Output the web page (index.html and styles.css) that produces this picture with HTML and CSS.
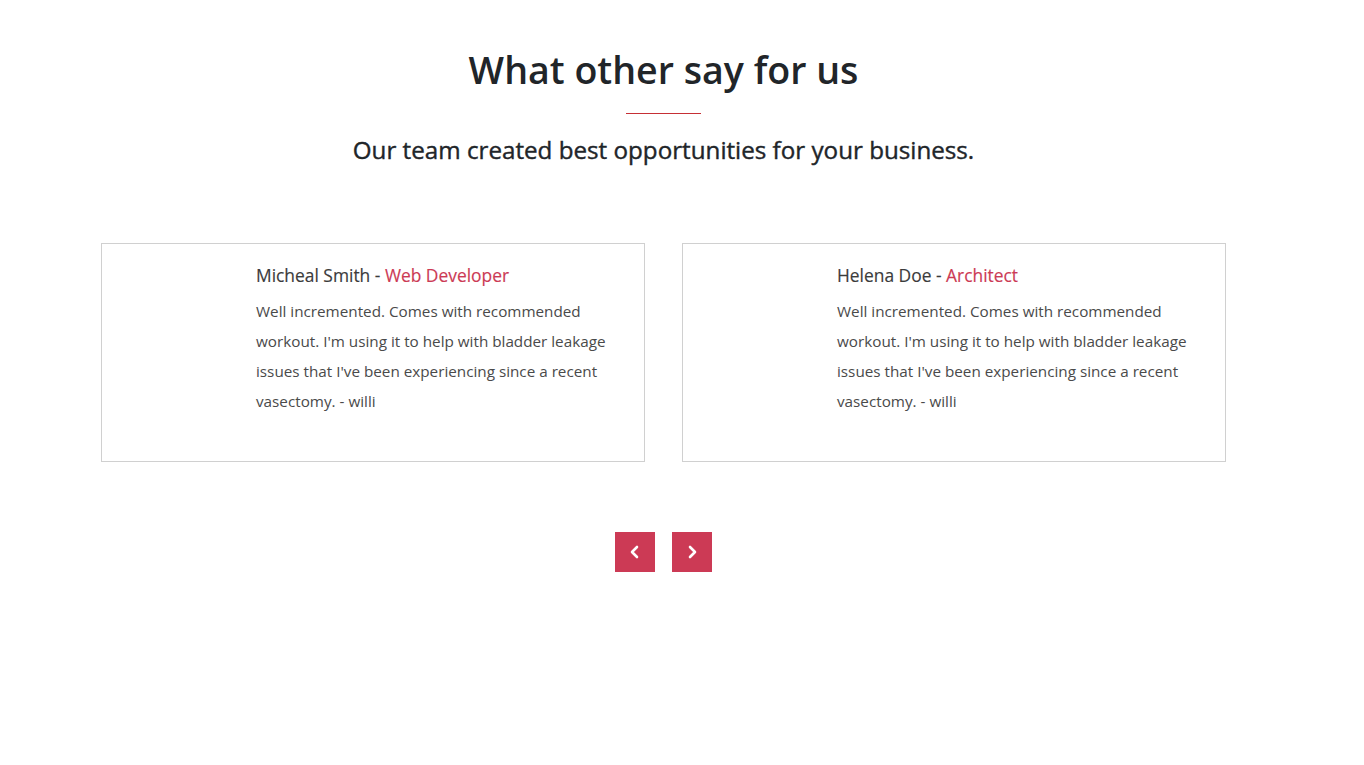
FILE: index.html
```html
<!DOCTYPE html>
<html lang="en">
<head>
<meta charset="utf-8">
<title>Testimonials</title>
<link rel="stylesheet" href="styles.css">
</head>
<body>
<section class="testimonials">
  <header class="section-head">
    <h2 class="section-title">What other say for us</h2>
    <span class="title-rule"></span>
    <h4 class="section-sub">Our team created best opportunities for your business.</h4>
  </header>

  <div class="carousel">
    <div class="slides">
      <article class="card">
        <h5 class="card-name">Micheal Smith - <span class="role">Web Developer</span></h5>
        <p class="card-text">Well incremented. Comes with recommended workout. I'm using it to help with bladder leakage issues that I've been experiencing since a recent vasectomy. - willi</p>
      </article>
      <article class="card">
        <h5 class="card-name">Helena Doe - <span class="role">Architect</span></h5>
        <p class="card-text">Well incremented. Comes with recommended workout. I'm using it to help with bladder leakage issues that I've been experiencing since a recent vasectomy. - willi</p>
      </article>
    </div>
    <div class="nav">
      <button class="nav-btn" aria-label="Previous">
        <svg width="14" height="14" viewBox="0 0 14 14"><path d="M9 2 L4 7 L9 12" fill="none" stroke="#fff" stroke-width="2.6" stroke-linecap="round" stroke-linejoin="round"/></svg>
      </button>
      <button class="nav-btn" aria-label="Next">
        <svg width="14" height="14" viewBox="0 0 14 14"><path d="M5 2 L10 7 L5 12" fill="none" stroke="#fff" stroke-width="2.6" stroke-linecap="round" stroke-linejoin="round"/></svg>
      </button>
    </div>
  </div>
</section>
</body>
</html>
```
FILE: styles.css
```css
* { box-sizing: border-box; }

body {
  margin: 0;
  background: #fff;
  font-family: "Open Sans", "Noto Sans", sans-serif;
  color: #212529;
}

.testimonials {
  width: 1327px;
  padding-top: 44px;
}

.section-head {
  display: flex;
  flex-direction: column;
  align-items: center;
}

.section-title {
  margin: 0;
  font-size: 37.6px;
  font-weight: 600;
  line-height: 52px;
  color: #212529;
}

.title-rule {
  display: block;
  width: 75px;
  height: 0;
  border-top: 1px solid #c62f35;
  margin-top: 17px;
}

.section-sub {
  margin: 19px 0 0;
  font-size: 24.2px;
  font-weight: 400;
  line-height: 34px;
  color: #212529;
  -webkit-text-stroke: 0.4px #212529;
}

.carousel {
  margin-top: 76px;
  display: flex;
  flex-direction: column;
  align-items: center;
}

.slides {
  display: flex;
  gap: 37px;
}

.card {
  width: 544px;
  height: 219px;
  border: 1px solid #d0d0d0;
  padding: 19px 30px 0 154px;
}

.card-name {
  margin: 0;
  font-size: 17.4px;
  font-weight: 400;
  line-height: 24px;
  color: #3b3b3b;
  -webkit-text-stroke: 0.15px currentColor;
}

.role { color: #cc3a55; }

.card-text {
  margin: 9px 0 0;
  font-size: 15.25px;
  line-height: 30px;
  color: #4a4a4a;
}

.nav {
  margin-top: 70px;
  display: flex;
  gap: 17px;
}

.nav-btn {
  width: 40px;
  height: 40px;
  border: 0;
  padding: 0;
  background: #cc3a55;
  display: flex;
  align-items: center;
  justify-content: center;
  cursor: pointer;
}
```
